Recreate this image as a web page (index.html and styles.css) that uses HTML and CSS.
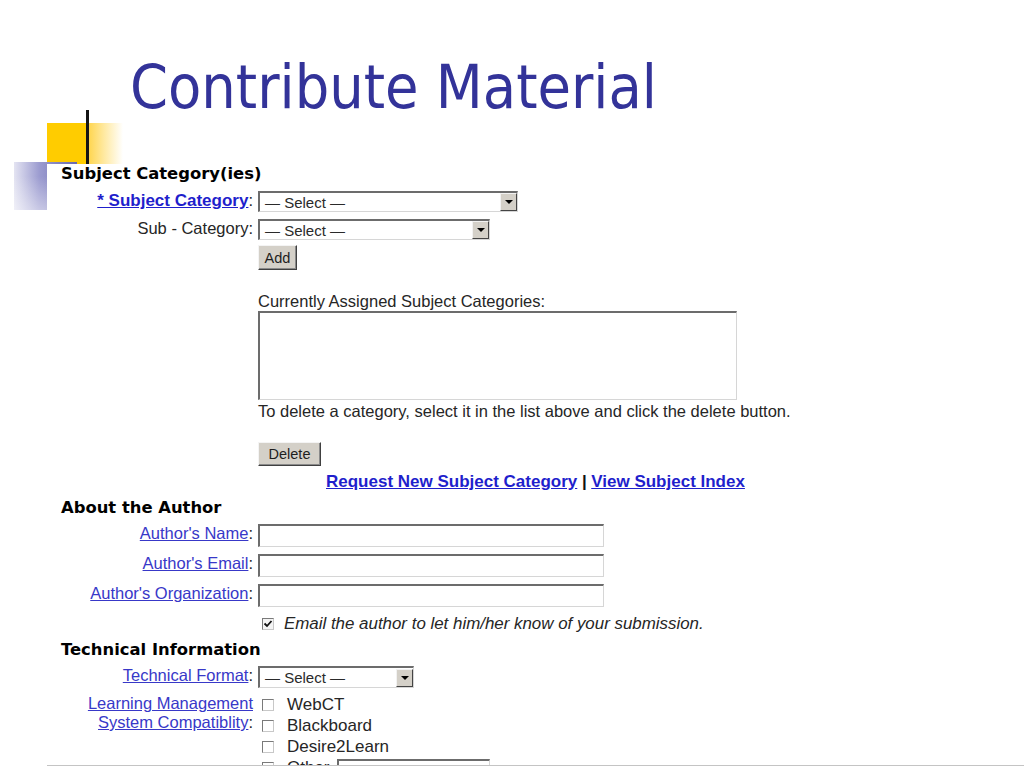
FILE: index.html
```html
<!DOCTYPE html>
<html lang="en">
<head>
<meta charset="utf-8">
<title>Contribute Material</title>
<link rel="stylesheet" href="styles.css">
</head>
<body>
<div class="deco-yellow"></div>
<div class="deco-line"></div>
<div class="deco-blue"></div>
<h1 class="title">Contribute Material</h1>
<div class="shot">
  <div class="sec">Subject Category(ies)</div>
  <div class="row m7">
    <span class="lbl"><a class="lnk bold">* Subject Category</a>:</span>
    <div class="sel w260"><span class="txt">— Select —</span><span class="arr"></span></div>
  </div>
  <div class="row m7">
    <span class="lbl">Sub - Category:</span>
    <div class="sel w232"><span class="txt">— Select —</span><span class="arr"></span></div>
  </div>
  <div class="row m5">
    <span></span>
    <div><button class="btn w39">Add</button></div>
  </div>
  <div class="row m22">
    <span></span>
    <div class="line18">Currently Assigned Subject Categories:</div>
  </div>
  <div class="row m1">
    <span></span>
    <div class="listbox"></div>
  </div>
  <div class="row m2">
    <span></span>
    <div class="line18">To delete a category, select it in the list above and click the delete button.</div>
  </div>
  <div class="row m22">
    <span></span>
    <div><button class="btn w63">Delete</button></div>
  </div>
  <div class="row m6">
    <span></span>
    <div class="line18 links"><a class="lnk bold">Request New Subject Category</a> <b class="sep">|</b> <a class="lnk bold">View Subject Index</a></div>
  </div>

  <div class="sec m7">About the Author</div>
  <div class="row m6">
    <span class="lbl"><a class="lnk">Author's Name</a>:</span>
    <div class="inp"></div>
  </div>
  <div class="row m7">
    <span class="lbl"><a class="lnk">Author's Email</a>:</span>
    <div class="inp"></div>
  </div>
  <div class="row m7">
    <span class="lbl"><a class="lnk">Author's Organization</a>:</span>
    <div class="inp"></div>
  </div>
  <div class="row m8">
    <span></span>
    <div class="check-row"><span class="cb checked"><svg width="10" height="10" viewBox="0 0 10 10"><path d="M1.5 4.5 L4 7 L8.5 2" fill="none" stroke="#111" stroke-width="1.8"/></svg></span><i>Email the author to let him/her know of your submission.</i></div>
  </div>

  <div class="sec m7">Technical Information</div>
  <div class="row m6">
    <span class="lbl"><a class="lnk">Technical Format</a>:</span>
    <div class="sel w156"><span class="txt">— Select —</span><span class="arr"></span></div>
  </div>
  <div class="row m6">
    <span class="lbl lms"><a class="lnk">Learning Management<br>System Compatiblity</a>:</span>
    <div class="opts">
      <div class="opt"><span class="cb"></span>WebCT</div>
      <div class="opt"><span class="cb"></span>Blackboard</div>
      <div class="opt"><span class="cb"></span>Desire2Learn</div>
      <div class="opt"><span class="cb"></span>Other<span class="inp small"></span></div>
    </div>
  </div>
</div>
<div class="rule"></div>
</body>
</html>
```

FILE: styles.css
```css
* { box-sizing: border-box; }
html, body { margin: 0; padding: 0; background: #fff; }
body {
  width: 1024px;
  height: 768px;
  overflow: hidden;
  position: relative;
  font-family: "Liberation Sans", Arial, sans-serif;
}

/* slide decorations */
.deco-yellow {
  position: absolute;
  left: 47px;
  top: 123px;
  width: 76px;
  height: 41px;
  background: linear-gradient(to right, #ffcc00 0%, #ffcc00 51%, #ffd650 55%, #ffe9a0 75%, #ffffff 100%);
}
.deco-line {
  position: absolute;
  left: 86px;
  top: 110px;
  width: 3px;
  height: 54px;
  background: #141414;
}
.deco-blue {
  position: absolute;
  left: 14px;
  top: 162px;
  width: 63px;
  height: 48px;
  background:
    linear-gradient(to bottom, rgba(255,255,255,0) 30%, rgba(255,255,255,0.45) 100%),
    linear-gradient(to right, #e4e4f2 0%, #9c9cd0 40%, #6868ae 100%);
}

.title {
  margin: 0;
  height: 164px;
  padding: 56px 0 0 130px;
  font-family: "DejaVu Sans Condensed", Tahoma, sans-serif;
  font-weight: normal;
  font-size: 60.5px;
  line-height: 62px;
  color: #333399;
}

/* embedded form screenshot */
.shot {
  position: relative;
  z-index: 1;
  margin-left: 47px;
  height: 601px;
  overflow: hidden;
  background: #fff;
  color: #262626;
  font-size: 16.5px;
}
.rule {
  margin-left: 47px;
  height: 1px;
  background: #c4c4c4;
}

.sec {
  padding-left: 14px;
  height: 20px;
  line-height: 20px;
  font-family: "DejaVu Sans", Verdana, sans-serif;
  font-weight: bold;
  font-size: 16.4px;
  color: #000;
}

.row {
  display: grid;
  grid-template-columns: 206px 1fr;
  column-gap: 5px;
  align-items: start;
}
.lbl { text-align: right; white-space: nowrap; line-height: 18px; }
.lms { line-height: 19px; }
.line18 { line-height: 18px; white-space: nowrap; }

.m1 { margin-top: 1px; }
.m2 { margin-top: 2px; }
.m5 { margin-top: 5px; }
.m6 { margin-top: 6px; }
.m7 { margin-top: 7px; }
.m8 { margin-top: 8px; }
.m22 { margin-top: 22px; }

.lnk { color: #3838c8; text-decoration: underline; cursor: pointer; }
.lnk.bold { font-weight: bold; font-size: 17px; color: #1f1fcc; }
.links { padding-left: 68px; }
.sep { font-size: 17px; color: #111; }

/* fake select */
.sel {
  display: flex;
  align-items: center;
  height: 21px;
  background: #fff;
  border-style: solid;
  border-width: 2px 1px 1px 2px;
  border-color: #6c6c6c #d6d6d6 #d6d6d6 #6c6c6c;
  padding-left: 5px;
  font-size: 15px;
  color: #2a2a2a;
}
.sel .txt { flex: 1; line-height: 17px; }
.sel .arr {
  width: 17px;
  height: 18px;
  background: #d4d0c8;
  border: 1px solid;
  border-color: #f2f2f2 #444 #444 #f2f2f2;
  display: flex;
  align-items: center;
  justify-content: center;
}
.sel .arr::after {
  content: "";
  border-left: 4px solid transparent;
  border-right: 4px solid transparent;
  border-top: 4px solid #000;
}
.w260 { width: 260px; }
.w232 { width: 232px; }
.w156 { width: 156px; height: 22px; }

.btn {
  display: block;
  height: 25px;
  margin: 0;
  padding: 0;
  background: #d4d0c8;
  border: 1px solid;
  border-color: #f4f4f4 #404040 #404040 #f4f4f4;
  box-shadow: inset -1px -1px 0 #8a8a8a;
  font-family: "Liberation Sans", Arial, sans-serif;
  font-size: 14.5px;
  color: #1e1e1e;
  line-height: 22px;
  text-align: center;
}
.w39 { width: 39px; }
.w63 { width: 63px; height: 24px; }

.listbox {
  width: 479px;
  height: 89px;
  background: #fff;
  border-style: solid;
  border-width: 2px 1px 1px 2px;
  border-color: #6c6c6c #d6d6d6 #d6d6d6 #6c6c6c;
}

.inp {
  width: 346px;
  height: 23px;
  background: #fff;
  border-style: solid;
  border-width: 2px 1px 1px 2px;
  border-color: #6c6c6c #d6d6d6 #d6d6d6 #6c6c6c;
}
.inp.small {
  display: block;
  width: 153px;
  height: 23px;
  margin-left: -6px;
  align-self: flex-start;
  margin-top: 2px;
}

.cb {
  display: inline-flex;
  align-items: center;
  justify-content: center;
  width: 12px;
  height: 12px;
  background: #fff;
  border: 1px solid;
  border-color: #7a7a7a #c8c8c8 #c8c8c8 #7a7a7a;
  flex: none;
}
.cb.checked { background: #f4f4f4; }

.check-row {
  display: flex;
  align-items: center;
  height: 18px;
  padding-left: 4px;
  gap: 10px;
  white-space: nowrap;
}
.check-row i { font-size: 16.9px; color: #262626; }

.opts { font-size: 17px; }
.opt {
  display: flex;
  align-items: center;
  height: 21px;
  padding-left: 4px;
  gap: 13px;
  white-space: nowrap;
  color: #262626;
}
```
